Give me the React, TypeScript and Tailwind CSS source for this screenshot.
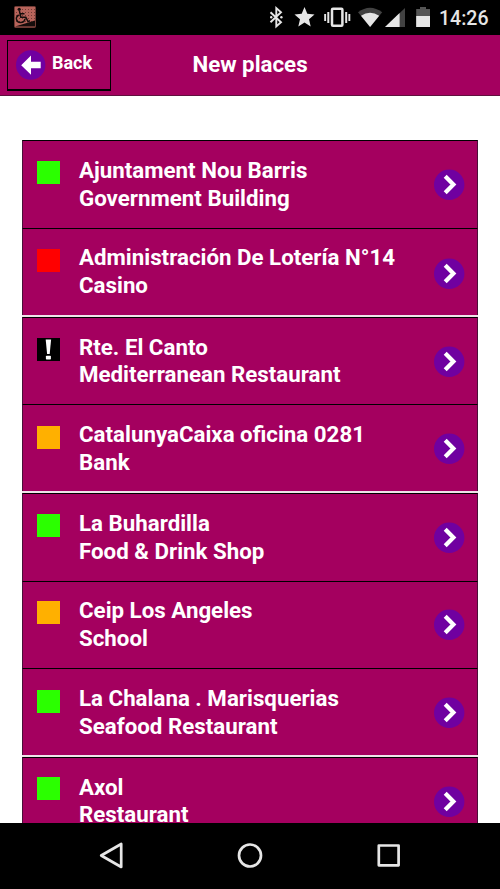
import React from "react";

type Status = "green" | "red" | "orange" | "alert";

interface Place {
  name: string;
  kind: string;
  status: Status;
  frame: string;
  mark: string;
  label: string;
  arrow: string;
}

const places: Place[] = [
  { name: "Ajuntament Nou Barris", kind: "Government Building", status: "green", frame: "h-[88px]", mark: "mt-5", label: "mt-4", arrow: "mt-7" },
  { name: "Administración De Lotería N°14", kind: "Casino", status: "red", frame: "h-[87px] mb-[2px]", mark: "mt-5", label: "mt-[15px]", arrow: "mt-[29px]" },
  { name: "Rte. El Canto", kind: "Mediterranean Restaurant", status: "alert", frame: "h-[87px]", mark: "mt-5", label: "mt-[15.5px]", arrow: "mt-7" },
  { name: "CatalunyaCaixa oficina 0281", kind: "Bank", status: "orange", frame: "h-[87px] mb-[2px]", mark: "mt-[21px]", label: "mt-4", arrow: "mt-7" },
  { name: "La Buhardilla", kind: "Food & Drink Shop", status: "green", frame: "h-[88px]", mark: "mt-5", label: "mt-4", arrow: "mt-7" },
  { name: "Ceip Los Angeles", kind: "School", status: "orange", frame: "h-[87px]", mark: "mt-[19px]", label: "mt-[15px]", arrow: "mt-[27px]" },
  { name: "La Chalana . Marisquerias", kind: "Seafood Restaurant", status: "green", frame: "h-[87px] mb-[2px]", mark: "mt-[21px]", label: "mt-4", arrow: "mt-7" },
  { name: "Axol", kind: "Restaurant", status: "green", frame: "h-[88px]", mark: "mt-[19px]", label: "mt-[15.5px]", arrow: "mt-7" },
];

const statusColor: Record<Status, string> = {
  green: "bg-[#2bff00]",
  red: "bg-[#ff0000]",
  orange: "bg-[#ffb000]",
  alert: "bg-black",
};

function StatusMark({ status, offset }: { status: Status; offset: string }) {
  return (
    <div className={`h-[23px] w-[23px] shrink-0 ${offset} ${statusColor[status]}`}>
      {status === "alert" && (
        <svg viewBox="0 0 23 23" className="block h-full w-full" fill="#fff">
          <path d="M8.7 1.6h5.4l-1.4 14.4h-2.6z" />
          <rect x="8.9" y="17.8" width="5" height="3.6" rx=".7" />
        </svg>
      )}
    </div>
  );
}

function PlaceRow({ place }: { place: Place }) {
  return (
    <li className={`flex shrink-0 border-x border-t border-t-black border-x-[#4a1038] bg-[#a4005f] pl-[14px] pr-3 ${place.frame}`}>
      <StatusMark status={place.status} offset={place.mark} />
      <div className={`ml-[19px] flex-1 whitespace-nowrap text-[22.3px] font-bold leading-[27.7px] text-white ${place.label}`}>
        <div>{place.name}</div>
        <div>{place.kind}</div>
      </div>
      <svg viewBox="0 0 31 31" className={`h-[31px] w-[31px] shrink-0 ${place.arrow}`}>
        <circle cx="15.2" cy="15.7" r="15.2" fill="#7000a0" />
        <path d="M11.2 7.2l8.2 8.3-8.2 8.3" fill="none" stroke="#fff" strokeWidth="4.2" />
      </svg>
    </li>
  );
}

function AppBadge() {
  return (
    <svg viewBox="0 0 22 22" className="mb-[2px] h-[22px] w-[22px]">
      <rect x=".5" y=".5" width="21" height="21" rx="1" fill="#b8645b" stroke="#713b35" />
      <g stroke="#713b35" strokeWidth="1" strokeDasharray="1 2">
        <path d="M8 3.5h13M2 6.5h19M2 9.5h19M2 12.5h19M2 15.5h19" />
      </g>
      <path d="M1 20.5L21 14.5v6z" fill="#160d0c" />
      <circle cx="5.2" cy="3.3" r="1.6" fill="#160d0c" />
      <path d="M5.4 5l1.4 6.2h5l2.2 4.4 2-.8M6 7.8h4.5M4.7 8.8c-4.3 3.2-1.8 8 2 7.7 2.5-.1 4-1.8 4.3-3.7" fill="none" stroke="#160d0c" strokeWidth="1.5" />
    </svg>
  );
}

function StatusBar() {
  return (
    <div className="flex h-[35px] shrink-0 items-center bg-black pl-[14px]">
      <AppBadge />
      <svg viewBox="262 0 174 35" className="ml-auto h-[35px] w-[174px]" fill="#e6e6e6">
        <path d="M270.5 12.2l10.5 10-4.7 4.2V8l4.7 4.2-10.5 10" fill="none" stroke="#e6e6e6" strokeWidth="1.9" />
        <circle cx="271.2" cy="17.2" r="1.2" />
        <circle cx="281.4" cy="17.2" r="1.2" />
        <path d="M304.5 7l2.8 6.8 7.2.6-5.5 4.8 1.7 7.3-6.2-3.9-6.2 3.9 1.7-7.3-5.5-4.8 7.2-.6z" />
        <rect x="332" y="8.7" width="10.4" height="17" rx="1" fill="none" stroke="#e6e6e6" strokeWidth="2.5" />
        <path d="M324.2 14h1.9v7h-1.9zM327.3 12h2v11h-2zM345.2 12h2v11h-2zM348.4 14h1.9v7h-1.9z" />
        <path d="M358 12.2Q370 3.2 382.2 12.2L370.1 27z" fill="#424242" />
        <path d="M361 15.8Q370 9.6 379.2 15.8L370.1 27z" />
        <path d="M405 8v19h-20z" fill="#424242" />
        <path d="M399.6 13v14h-14.6z" />
        <path d="M420 7h6v2h4v18h-13.8V9h3.8z" fill="#555" />
        <path d="M416.2 16H430v11h-13.8z" />
      </svg>
      <span className="ml-[3px] mr-[11px] mt-[2px] w-[50px] whitespace-nowrap text-[19.5px] font-medium leading-none text-[#e6e6e6]">14:26</span>
    </div>
  );
}

function Header() {
  return (
    <header className="grid h-[61px] shrink-0 grid-cols-[1fr_auto_1fr] border-b border-[#60103e] bg-[#a4005f] text-white">
      <button className="ml-[7px] mt-[5px] flex h-[51px] w-[104px] items-center border border-b-2 border-black pl-2">
        <svg viewBox="0 0 30 30" className="h-[30px] w-[30px] shrink-0">
          <circle cx="14.7" cy="15" r="14.7" fill="#7000a0" />
          <path d="M5.2 15.2L15 5.5v6.3h9.7v6.5H15v6.5z" fill="#fff" />
        </svg>
        <span className="mb-1 ml-[6px] text-[18px] font-bold leading-none">Back</span>
      </button>
      <h1 className="mt-[15px] whitespace-nowrap text-[22.3px] font-bold leading-[28px]">New places</h1>
      <div />
    </header>
  );
}

function NavigationBar() {
  return (
    <nav className="h-[66px] shrink-0 bg-black">
      <svg viewBox="0 823 500 66" className="block h-[66px] w-[500px]" fill="none" stroke="#e6e6e6" strokeWidth="2.7" strokeLinejoin="round">
        <path d="M101.2 855.5l20-11.5v23z" />
        <circle cx="250" cy="855.5" r="11" />
        <rect x="378.8" y="845.5" width="19.8" height="19.8" />
      </svg>
    </nav>
  );
}

export default function App() {
  return (
    <div className="flex h-[889px] w-[500px] flex-col overflow-hidden bg-white font-[Roboto,sans-serif]">
      <StatusBar />
      <Header />
      <main className="min-h-0 flex-1 overflow-hidden px-[22px] pt-[44px]">
        <ul className="flex flex-col bg-[#efe4e9]">
          {places.map((place) => (
            <PlaceRow key={place.name} place={place} />
          ))}
        </ul>
      </main>
      <NavigationBar />
    </div>
  );
}
